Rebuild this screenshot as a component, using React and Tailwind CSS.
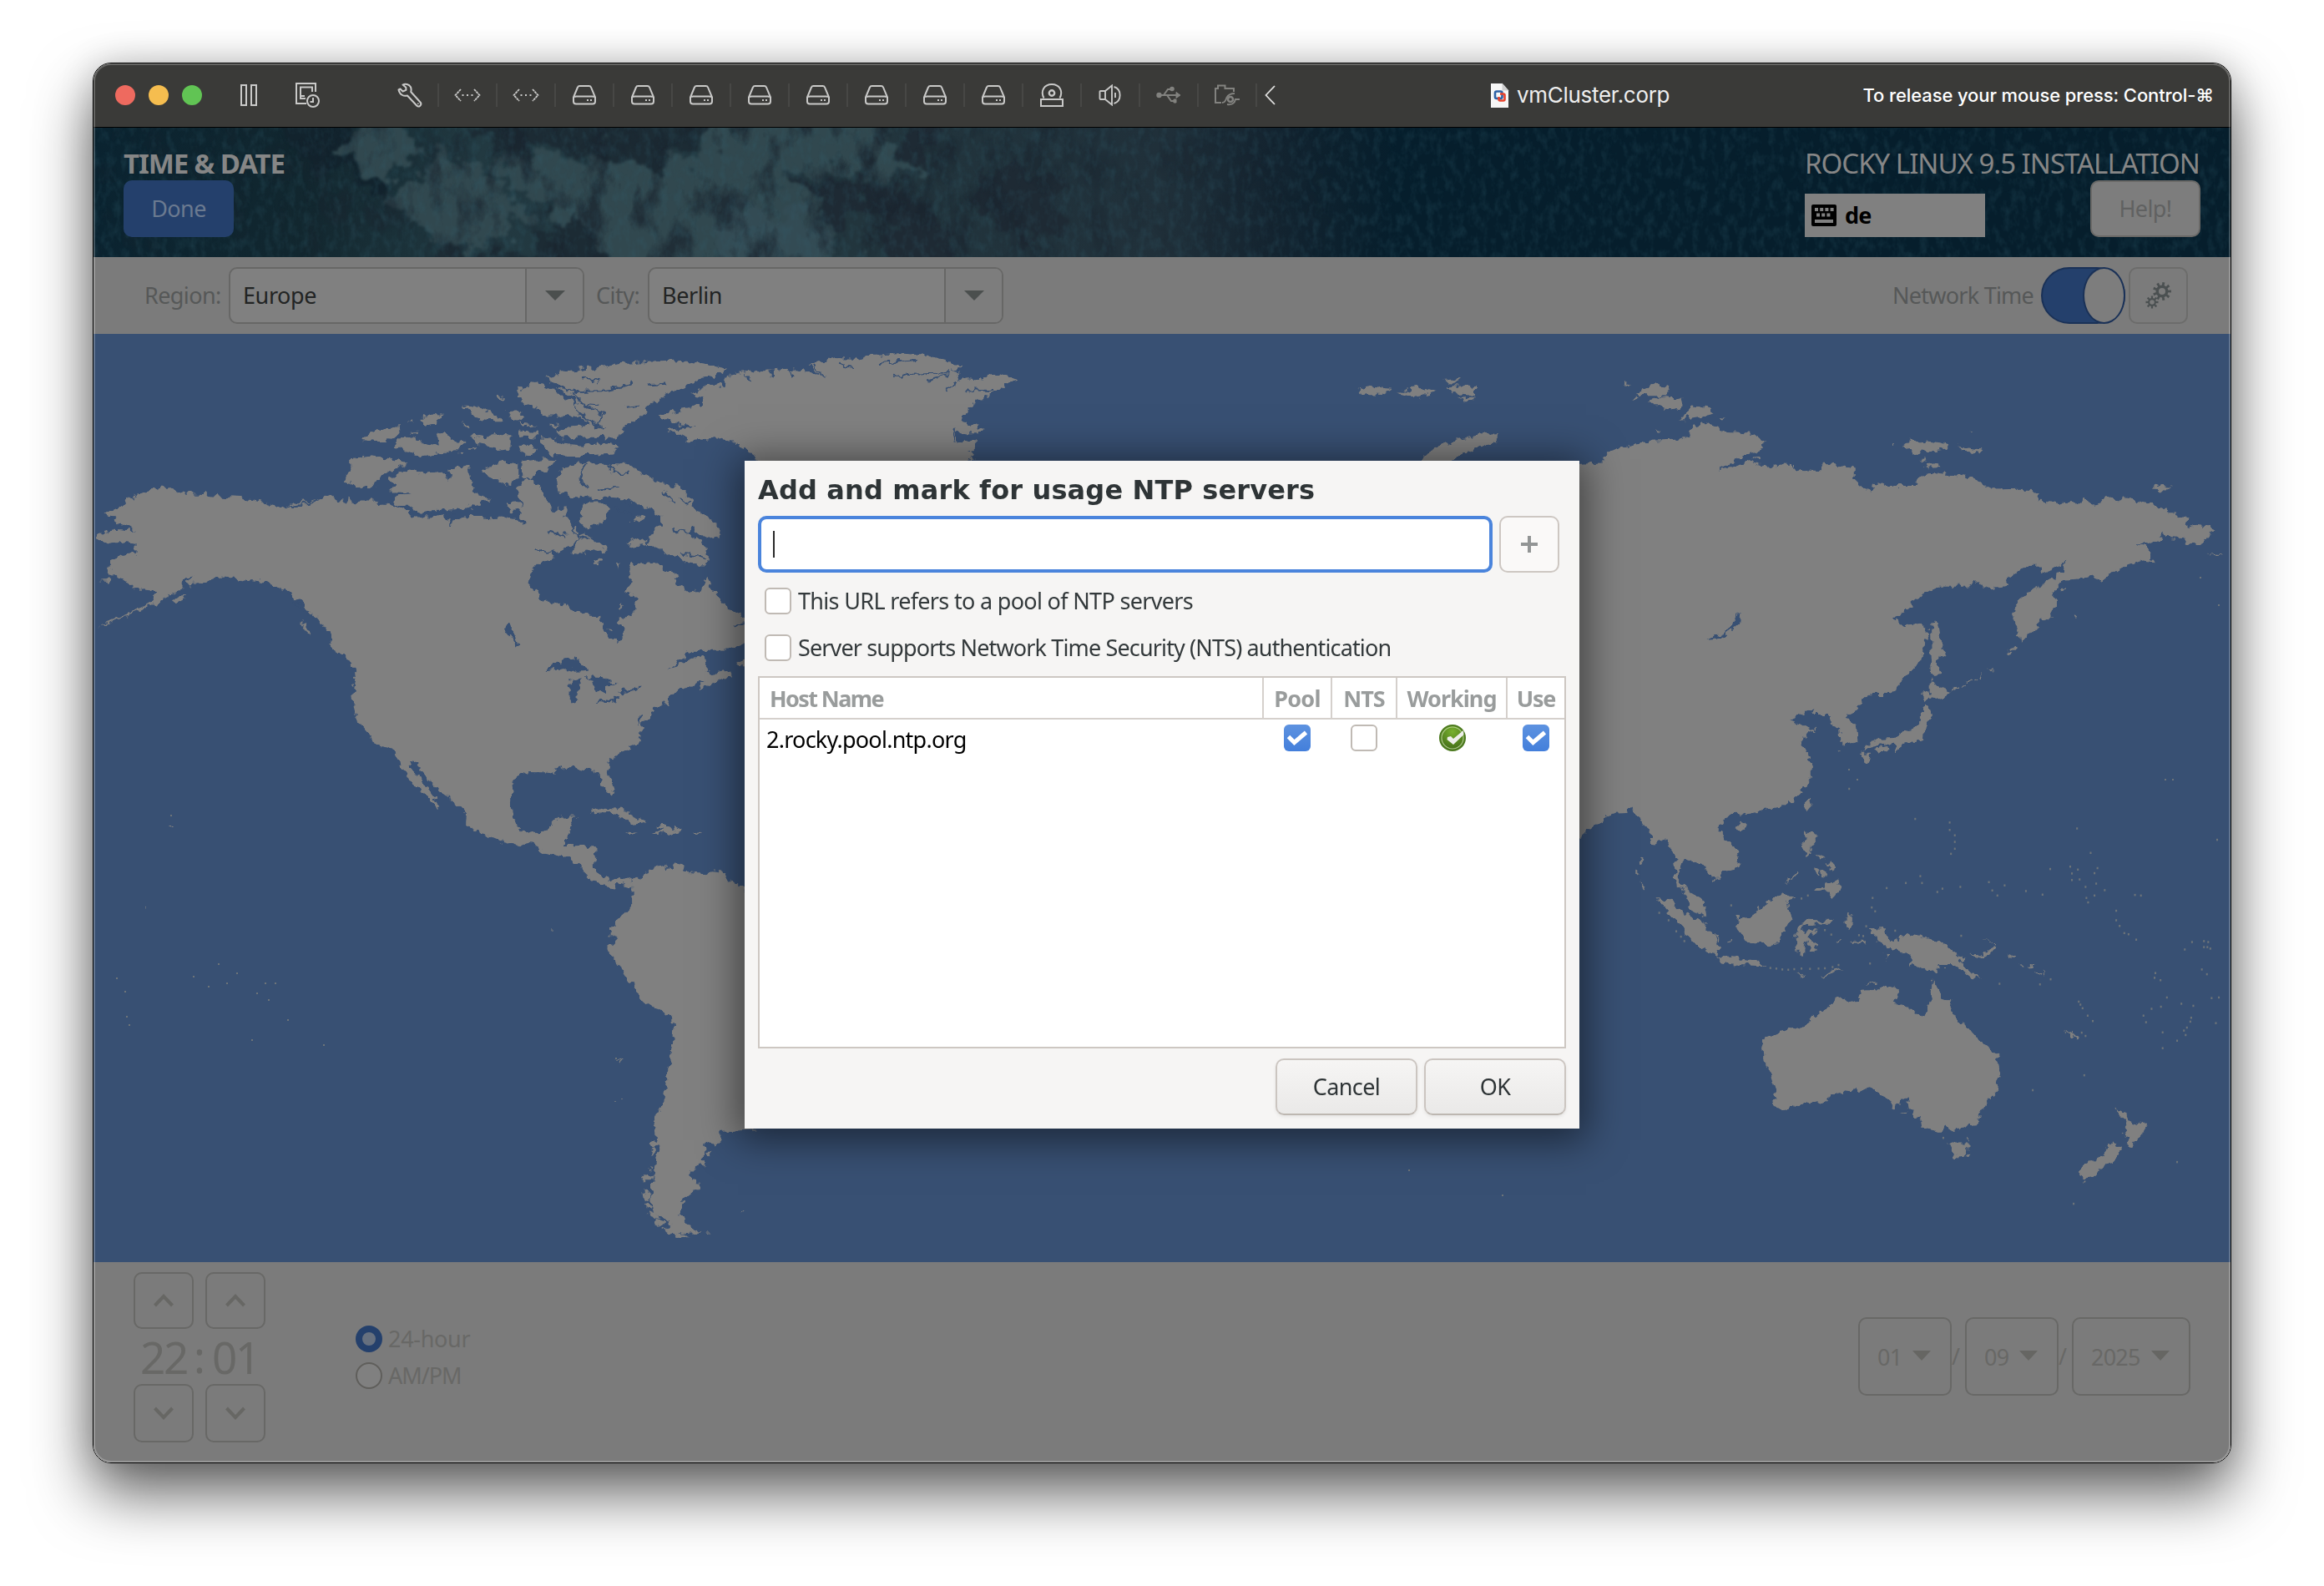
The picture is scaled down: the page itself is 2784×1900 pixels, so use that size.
import React from "react";

const GUEST = "font-['Noto_Sans',sans-serif]";

/* ---------- toolbar icons ---------- */

const Disk = () => (
  <svg width="30" height="26" viewBox="0 0 30 26" fill="none" stroke="#c9c9c8" strokeWidth="2">
    <path d="M7 3.500Q7.600 2 9.500 2H20.500Q22.400 2 23 3.500L28 15.500V20.500Q28 23.500 25 23.500H5Q2 23.500 2 20.500V15.500Z" />
    <path d="M3 15.500Q3.500 14.500 5 14.500H25Q26.500 14.500 27 15.500" />
    <path d="M18 19H20M22 19H24" />
  </svg>
);
const Net = () => (
  <svg width="32" height="18" viewBox="0 0 32 18" fill="none" stroke="#c9c9c8" strokeWidth="1.800">
    <path d="M8 2L1.500 9L8 16M24 2L30.500 9L24 16" strokeDasharray="3 .6" />
    <path d="M9.500 9H11.500M15 9H17M20.500 9H22.500" strokeWidth="2" />
  </svg>
);
const Wrench = () => (
  <svg width="30" height="30" viewBox="0 0 30 30" fill="none" stroke="#c9c9c8" strokeWidth="2" strokeLinejoin="round">
    <path d="M6.500 2.500C9.500 .8 14 1.800 15.800 5C16.800 7 16.800 9 16.200 11L27.500 23.500C30 26.500 25.800 30.200 23.200 27.500L12 15.500C7.500 16.800 2.800 14.500 1.500 8.500L3.500 7.500L6.500 10.500L10.500 8.800L10.300 5.800Z" />
    <path d="M24.800 24.500V26" strokeWidth="1.500" />
  </svg>
);
const Snapshot = () => (
  <svg width="30" height="32" viewBox="0 0 30 32" fill="none" stroke="#c9c9c8" strokeWidth="2">
    <path d="M13 26H1V2H24V12" />
    <path d="M11 17H6V6.500H20V12M6 17V20H12" />
    <circle cx="21" cy="23" r="7" />
    <path d="M21 19V24H17.500" />
  </svg>
);
const Cd = () => (
  <svg width="30" height="30" viewBox="0 0 30 30" fill="none" stroke="#c9c9c8" strokeWidth="2">
    <path d="M5.500 18.500C1 10 6 2 15 2S29 10 24.500 18.500" />
    <circle cx="15" cy="12.500" r="3.200" strokeWidth="2.400" />
    <path d="M2 20H28V28H2Z" />
  </svg>
);
const Sound = () => (
  <svg width="28" height="26" viewBox="0 0 28 26" fill="none" stroke="#c9c9c8" strokeWidth="1.900">
    <path d="M8 8H2.500Q1.500 8 1.500 9V17Q1.500 18 2.500 18H8ZM8 8L16 1.500V24.500L8 18" />
    <path d="M18.500 3C28 6 28 20 18.500 23" />
    <path d="M20 10V16" />
  </svg>
);
const Usb = () => (
  <svg width="30" height="22" viewBox="0 0 30 22" fill="none" stroke="#82827f" strokeWidth="2">
    <circle cx="3.500" cy="11" r="2.200" fill="#82827f" />
    <path d="M3 11H26M9 11L14 4H17M13 11L18 18H21" />
    <circle cx="19" cy="3.500" r="1.800" fill="#82827f" />
    <path d="M21 16H24V20H21Z" fill="#82827f" strokeWidth="1" />
    <path d="M24 7.500L29 11L24 14.500Z" fill="#82827f" strokeWidth="1" />
  </svg>
);
const Folder = () => (
  <svg width="32" height="28" viewBox="0 0 32 28" fill="none" stroke="#82827f" strokeWidth="2">
    <path d="M9 23H2V6H5V2.500H13.500V6H24V10" />
    <path d="M10 23C14 23 14 20 15.500 17C17 14 20 12 25 12" />
    <circle cx="20" cy="19" r="3" strokeWidth="2.500" />
    <path d="M16 25C21 26 25 24 26 19H31" />
  </svg>
);

const DocIcon = () => (
  <svg width="23" height="31" viewBox="0 0 23 31">
    <path d="M.5 .5H14.500L22.500 9.500V30.500H.5Z" fill="#f6f6f6" stroke="#222" strokeWidth=".8" />
    <path d="M14.500 .5V9.500H22.500Z" fill="#cfcfcf" />
    <rect x="6" y="10.500" width="8.500" height="8.500" rx="2" fill="none" stroke="#2e62a6" strokeWidth="2.600" />
    <path d="M12 13.500H16Q17.500 13.500 17.500 15V20Q17.500 21.500 16 21.500H12Q10.500 21.500 10.500 20V17" fill="none" stroke="#e8432d" strokeWidth="2.600" />
  </svg>
);

function TitleBar() {
  const cells = [Net, Net, Disk, Disk, Disk, Disk, Disk, Disk, Disk, Disk, Cd, Sound, Usb, Folder];
  return (
    <div className="flex h-[77px] shrink-0 items-center border-b border-black bg-[#3a3a38] pl-[26px] pr-5 font-['Inter',sans-serif]">
      <div className="flex gap-4">
        <span className="size-6 rounded-full bg-[#ee6a5f]" />
        <span className="size-6 rounded-full bg-[#f5bd4f]" />
        <span className="size-6 rounded-full bg-[#61c454]" />
      </div>
      <svg className="ml-[46px]" width="20" height="26" viewBox="0 0 20 26" fill="none" stroke="#c9c9c8" strokeWidth="2">
        <path d="M1 1H7V25H1ZM13 1H19V25H13Z" />
      </svg>
      <span className="ml-[46px] w-[30px]"><Snapshot /></span>
      <span className="ml-[92px] w-[30px]"><Wrench /></span>
      <div className="ml-[18px] flex">
        {cells.map((Icon, i) => (
          <span key={i} className="flex h-[28px] w-[70px] items-center justify-center border-l-2 border-[#474745]">
            <Icon />
          </span>
        ))}
        <span className="flex h-[28px] items-center border-l-2 border-[#474745] pl-[9px]">
          <svg width="13" height="24" viewBox="0 0 13 24" fill="none" stroke="#dededd" strokeWidth="1.800"><path d="M12 1L1.500 12L12 23" /></svg>
        </span>
      </div>
      <div className="ml-[257px] flex items-center gap-[9px]">
        <DocIcon />
        <span className="whitespace-nowrap text-[26px] leading-8 tracking-[-0.3px] text-[#eeeeee]">vmCluster.corp</span>
      </div>
      <span className="ml-auto whitespace-nowrap text-[22px] font-medium leading-8 tracking-[-0.1px] text-white">To release your mouse press: Control-⌘</span>
    </div>
  );
}

/* ---------- installer header ---------- */

const Texture = () => (
  <svg className="absolute inset-0" width="2560" height="155" viewBox="112 153 2560 155" preserveAspectRatio="none">
    <defs>
      <linearGradient id="sea" x1="0" x2="1" y1="0" y2="0">
        <stop offset="0" stopColor="#0a2330" />
        <stop offset=".1" stopColor="#12272f" />
        <stop offset=".18" stopColor="#223941" />
        <stop offset=".36" stopColor="#22353d" />
        <stop offset=".5" stopColor="#20303a" />
        <stop offset=".55" stopColor="#142430" />
        <stop offset=".61" stopColor="#061e2c" />
        <stop offset="1" stopColor="#061e2c" />
      </linearGradient>
      <linearGradient id="fadeStops" x1="0" x2="1" y1="0" y2="0">
        <stop offset="0" stopColor="#fff" stopOpacity=".35" />
        <stop offset=".1" stopColor="#fff" stopOpacity=".5" />
        <stop offset=".2" stopColor="#fff" />
        <stop offset=".38" stopColor="#fff" />
        <stop offset=".52" stopColor="#fff" stopOpacity=".35" />
        <stop offset=".59" stopColor="#fff" stopOpacity="0" />
      </linearGradient>
      <mask id="fade"><rect x="112" y="153" width="2560" height="155" fill="url(#fadeStops)" /></mask>
      <filter id="rough" x="-5%" y="-20%" width="110%" height="140%" colorInterpolationFilters="sRGB">
        <feTurbulence type="fractalNoise" baseFrequency=".035" numOctaves="5" seed="4" result="n" />
        <feDisplacementMap in="SourceGraphic" in2="n" scale="70" xChannelSelector="R" yChannelSelector="G" />
        <feGaussianBlur stdDeviation="1.600" />
      </filter>
      <filter id="darkVeins" x="0" y="0" width="100%" height="100%" colorInterpolationFilters="sRGB">
        <feTurbulence type="fractalNoise" baseFrequency=".03 .018" numOctaves="5" seed="8" />
        <feColorMatrix values="0 0 0 0 .1  0 0 0 0 .14  0 0 0 0 .18  4 0 0 0 -1.950" />
      </filter>
      <filter id="grain" x="0" y="0" width="100%" height="100%" colorInterpolationFilters="sRGB">
        <feTurbulence type="fractalNoise" baseFrequency=".11 .07" numOctaves="3" seed="3" />
        <feColorMatrix values="0 0 0 0 .2  0 0 0 0 .38  0 0 0 0 .44  1.800 0 0 0 -.75" />
      </filter>
    </defs>
    <rect x="112" y="153" width="2560" height="155" fill="url(#sea)" />
    <g filter="url(#rough)">
      <g transform="translate(100 60) scale(.4847 .3333)">
        <g fill="#31484f">
          <path d="M660 230H770L830 330L800 420L740 470L690 420L665 370L630 350Z" />
          <path d="M860 400L940 390L1010 440L1060 520L1110 620L1000 680L900 720L780 560L760 500L830 470Z" />
          <path d="M1000 380L1200 380L1400 400L1568 410L1620 800H1290L1230 640L1130 560L1030 440Z" />
        </g>
        <g fill="#1c2b34">
          <path d="M960 230H1568V330L1420 410L1300 380L1150 350L1000 350Z" />
          <path d="M1140 600L1230 600L1280 700L1270 820H850L900 720L1050 730L1150 690Z" />
          <path fill="#12232d" d="M480 230H640L640 350L700 430L760 500L740 540L660 450L540 420Z" />
        </g>
      </g>
      <g transform="translate(860 60) scale(.4847 .3333)">
        <path fill="#31484f" d="M-60 400L0 230H370L420 330L500 430L380 460L250 440L160 480L240 520L280 680L360 820H-60Z" />
        <path fill="#334b54" d="M10 560L230 600L290 740L0 800Z" />
        <g fill="#1e2a34">
          <path d="M170 470L400 480L500 520L560 620L570 820H400L430 600L350 560L270 660L250 530Z" />
          <path d="M640 430L860 430L860 640L740 700L640 560Z" />
          <path d="M460 230H560L500 420L440 330Z" />
        </g>
      </g>
    </g>
    <rect x="112" y="153" width="2560" height="155" filter="url(#darkVeins)" mask="url(#fade)" opacity=".7" />
    <rect x="112" y="153" width="2560" height="155" filter="url(#grain)" opacity=".3" />
  </svg>
);

function Header() {
  return (
    <div className="relative h-[155px] shrink-0 overflow-hidden">
      <Texture />
      <div className="relative flex justify-between px-9 pt-[21px]">
        <div>
          <div className="h-[42px] whitespace-nowrap text-[33px] font-bold leading-[43px] tracking-[-1.1px] text-[#868686]">TIME &amp; DATE</div>
          <button className="flex h-[68px] w-[132px] items-center justify-center rounded-[10px] bg-[#24406c] text-[27px] tracking-[-0.6px] text-[#6b7a90]">Done</button>
        </div>
        <div className="w-[474px]">
          <div className="h-[42px] whitespace-nowrap text-[33px] leading-[43px] tracking-[-1px] text-[#868686]">ROCKY LINUX 9.5 INSTALLATION</div>
          <div className="flex items-end justify-between">
            <div className="flex h-[52px] w-[216px] items-center gap-[10px] bg-[#808080] pl-2 text-[27px] font-bold tracking-[-0.8px] text-black">
              <svg width="30" height="26" viewBox="0 0 30 26">
                <rect width="30" height="26" rx="2" />
                <path d="M4 6H27" stroke="#808080" strokeWidth="4" strokeDasharray="4 2.200" />
                <path d="M6 12.500H24" stroke="#808080" strokeWidth="4" strokeDasharray="4 2.200" />
                <path d="M4 20H26" stroke="#808080" strokeWidth="4" />
              </svg>
              de
            </div>
            <button className="flex h-[68px] w-[132px] items-center justify-center rounded-[10px] border-2 border-[#6a6967] bg-[#7d7d7d] text-[27px] tracking-[-0.6px] text-[#606161]">Help!</button>
          </div>
        </div>
      </div>
    </div>
  );
}

/* ---------- region row ---------- */

const Combo = ({ value }) => (
  <div className="flex h-[68px] w-[426px] overflow-hidden rounded-[10px] border-2 border-[#676766] bg-[#808080]">
    <span className="flex w-[353px] items-center pl-[15px] pt-px text-[27px] tracking-[-0.4px] text-[#222424]">{value}</span>
    <span className="flex flex-1 items-center justify-center border-l-2 border-[#676766] bg-[#7d7d7d]">
      <svg width="24" height="12" viewBox="0 0 24 12" fill="#4b4f4e"><path d="M0 0H24L12 12Z" /></svg>
    </span>
  </div>
);

function gearPath(cx, cy, r, depth, teeth) {
  let d = "";
  for (let i = 0; i < teeth; i++) {
    const a = (i / teeth) * Math.PI * 2;
    const s = Math.PI / teeth;
    const p = (ang, rad) => `${(cx + Math.cos(ang) * rad).toFixed(2)} ${(cy + Math.sin(ang) * rad).toFixed(2)}`;
    d += `${i ? "L" : "M"}${p(a - s * 0.4, r + depth)}L${p(a + s * 0.4, r + depth)}L${p(a + s * 0.5, r)}L${p(a + s * 1.5, r)}`;
  }
  return d + "Z";
}

function RegionBar() {
  return (
    <div className="flex h-[92px] shrink-0 items-center bg-[#7b7b7b] pl-[61px] text-[27px] text-[#565858]">
      <span className="w-[101px] whitespace-nowrap tracking-[-0.6px]">Region:</span>
      <Combo value="Europe" />
      <span className="ml-[14px] w-[62px] whitespace-nowrap tracking-[-0.5px]">City:</span>
      <Combo value="Berlin" />
      <span className="ml-auto w-[178px] whitespace-nowrap tracking-[-0.75px]">Network Time</span>
      <span className="flex h-[68px] w-[101px] justify-end rounded-[34px] border-2 border-[#1a3157] bg-[#24406c]">
        <span className="-my-0.5 -mr-0.5 h-[68px] w-[51px] rounded-[50%] border-2 border-[#1a3157] bg-[#7d7d7d]" />
      </span>
      <span className="ml-[4px] mr-[51px] flex h-[68px] w-[71px] items-center justify-center rounded-[10px] border-2 border-[#6c6c6b] bg-[#7b7b7b]">
        <svg width="32" height="34" viewBox="0 0 32 34" fill="none">
          <path d={gearPath(20, 12, 7.5, 3.5, 9)} fill="#4b5051" />
          <circle cx="20" cy="12" r="4" fill="#7b7b7b" />
          <path d={gearPath(8, 25, 5, 2.6, 8)} fill="#4b5051" />
          <circle cx="8" cy="25" r="2.800" fill="#7b7b7b" />
        </svg>
      </span>
    </div>
  );
}

/* ---------- world map ---------- */

const northAmerica = [
  "165,425 180,425 200,434 235,440 270,442 300,447 345,450 385,460 410,464 450,479 480,465 520,457 545,450 562,442 580,458 600,466 607,452 615,466 630,458 660,458 690,470 720,475 745,483 742,495 760,503 800,503 825,498 835,508 847,530 848,510 870,503 890,498 930,507 970,505 1000,512 1010,524 1018,510 1005,495 1010,465 1003,450 1000,430 1008,405 1030,400 1055,420 1062,445 1072,465 1085,490 1100,475 1115,485 1110,505 1120,510 1130,530 1145,540 1138,560 1120,585 1100,590 1080,600 1085,612 1055,620 1040,640 1028,665 1025,695 1045,700 1058,730 1085,730 1130,750 1160,765 1198,767 1200,800 1215,822 1235,838 1248,825 1246,805 1238,775 1262,768 1275,750 1278,725 1270,710 1250,702 1262,685 1265,665 1258,640 1262,625 1290,628 1320,625 1340,645 1370,655 1376,685 1400,705 1430,700 1443,665 1455,690 1475,715 1490,745 1530,770 1600,800 1560,830 1533,840 1500,857 1420,858 1395,870 1355,915 1375,900 1410,882 1440,878 1443,900 1440,915 1460,925 1500,915 1505,932 1470,945 1430,968 1425,955 1440,940 1400,955 1375,965 1358,985 1360,998 1340,1005 1315,1018 1312,1040 1290,1060 1287,1085 1285,1105 1250,1130 1215,1155 1210,1180 1220,1205 1228,1235 1220,1250 1205,1235 1193,1210 1190,1190 1175,1182 1155,1180 1120,1173 1085,1180 1090,1192 1060,1188 1025,1187 1000,1198 987,1220 990,1245 983,1265 985,1300 1005,1340 1030,1350 1070,1343 1085,1320 1100,1305 1135,1305 1125,1325 1120,1355 1108,1382 1150,1383 1185,1390 1183,1410 1178,1445 1200,1470 1220,1482 1240,1470 1270,1480 1290,1500 1240,1485 1225,1500 1200,1492 1165,1465 1125,1420 1070,1405 1040,1382 1020,1378 1000,1385 950,1368 910,1350 878,1328 880,1300 860,1275 820,1240 800,1215 770,1180 760,1160 745,1155 750,1175 780,1220 800,1250 818,1278 810,1283 785,1260 775,1240 745,1210 735,1185 708,1130 665,1110 650,1085 620,1045 612,985 620,940 615,900 605,885 565,855 560,820 530,775 500,740 460,700 435,690 400,675 350,670 320,665 290,665 255,680 225,685 240,655 215,680 205,700 165,725 130,745 80,768 15,800 50,775 110,750 140,730 155,700 120,695 92,698 90,680 60,665 35,640 45,620 70,605 103,600 103,575 70,570 35,577 10,552 50,535 110,540 90,530 60,520 55,505 28,490 65,480 80,455 120,437",
  "610,345 650,338 700,345 740,362 700,378 670,405 665,420 632,427 610,410 593,403 610,370",
  "690,400 740,375 780,385 825,380 838,410 842,375 885,362 885,380 890,405 900,440 935,455 910,470 880,478 830,485 770,488 740,470 710,470 715,450 750,440 700,435 715,415",
  "635,295 665,270 700,260 730,258 715,280 695,300 670,300",
  "710,320 720,290 745,288 780,305 815,310 812,285 830,275 840,298 875,300 865,325 820,330 770,340 740,325",
  "770,240 790,225 822,228 810,250 780,260",
  "875,205 910,208 950,225 962,245 935,245 900,235",
  "950,178 968,182 965,188 952,186",
  "742,242 758,242 755,250", "870,250 888,262 884,266", "750,275 765,273 762,280", "884,320 898,316 898,324", "1075,255 1095,255 1090,265", "1000,250 1045,254 1010,258",
  "890,285 930,290 945,278 985,290 985,320 950,325 925,310 900,305",
  "975,220 1000,218 1018,235 1010,245 985,240",
  "1000,315 1020,308 1042,320 1040,333 1010,330",
  "998,272 1045,275 1045,290 1005,288",
  "915,380 940,360 975,352 1000,365 1000,400 975,420 960,405 930,395",
  "970,465 1000,462 1010,480 990,488",
  "1010,355 1060,348 1085,350 1070,375 1045,385 1030,400 1012,390",
  "1003,185 1005,160 1045,138 1060,150 1095,170 1130,195 1135,220 1110,232 1065,232 1040,210 1020,205",
  "1065,130 1110,115 1160,103 1200,100 1240,90 1300,85 1360,82 1420,90 1490,105 1470,120 1430,130 1390,155 1340,180 1305,205 1300,220 1275,245 1240,262 1250,275 1230,290 1150,288 1105,290 1090,270 1120,262 1170,255 1150,240 1120,225 1140,200 1130,180 1100,160 1080,145",
  "1055,290 1090,290 1100,305 1150,310 1215,303 1238,318 1225,335 1180,338 1120,338 1080,335 1060,315",
  "1092,400 1105,370 1145,357 1200,358 1260,360 1285,380 1330,410 1380,425 1410,455 1415,480 1450,505 1478,530 1475,555 1460,565 1430,550 1410,530 1400,545 1440,580 1447,610 1440,632 1400,625 1350,600 1310,570 1310,550 1335,525 1335,500 1300,475 1260,455 1220,450 1180,455 1130,450 1095,430",
  "1150,465 1190,462 1215,480 1205,510 1180,530 1160,535 1145,510",
  "1140,560 1150,545 1175,560 1215,595 1190,598 1165,590 1155,605 1130,600",
  "1255,570 1285,560 1310,575 1275,582", "1268,510 1280,495 1298,505 1290,518", "1180,620 1195,612 1200,622 1185,628", "1227,628 1240,628 1235,640",
  "1515,890 1533,880 1545,905 1520,902",
  "1168,1298 1200,1283 1235,1285 1270,1305 1308,1322 1270,1328 1250,1312 1215,1294",
  "1325,1330 1350,1328 1390,1345 1350,1355 1310,1350 1340,1345",
  "1255,1347 1282,1351 1262,1356", "1408,1347 1430,1349 1412,1355",
  "188,727 205,712 225,710 220,722 200,735", "15,672 40,668 38,676",
  "556,848 575,848 600,860 630,885 640,908 605,885", "490,785 500,787 517,822 500,805",
  "1210,805 1220,808 1214,812", "1232,745 1245,740 1240,752",
  "182,1327 190,1330 187,1337", "129,1543 134,1545 131,1548",
];
const northLakes = [
  "963,795 978,785 990,815 1002,845 998,853 985,825 970,815",
  "1062,915 1090,890 1125,880 1150,890 1165,915 1140,918 1115,910 1090,912",
  "1125,940 1150,935 1140,970 1140,995 1128,1000 1120,980",
  "1160,930 1200,932 1230,950 1205,955 1208,975 1185,965 1180,945",
  "1183,1000 1240,985 1235,995 1200,1003", "1235,970 1285,960 1280,970 1245,975",
];
const northInlets = [
  "1085,148 1140,168 1200,166 1240,155 1270,140", "1130,170 1150,200 1190,205", "1160,205 1200,225 1185,260", "1250,210 1290,205", "1300,150 1345,145",
  "1135,215 1160,240 1200,262", "1150,130 1190,140", "1160,360 1145,385 1150,410 1165,425", "1215,360 1225,385 1260,385", "1190,430 1240,425",
  "1245,455 1262,475", "1340,430 1370,470", "1365,535 1400,545", "1380,600 1440,612", "1380,450 1405,470", "1230,480 1270,500", "745,440 710,438",
  "1070,545 1120,555", "1040,590 1080,600", "455,480 530,458", "450,700 520,775", "465,715 490,740", "745,488 850,497", "1145,500 1130,545 1165,560", "1505,797 1535,785", "1280,1060 1290,1035",
];
const greenland =
  "450,165 490,155 540,150 590,145 640,140 690,150 750,165 705,130 740,115 790,102 860,105 900,90 980,85 1070,92 1110,105 1185,130 1150,148 1175,155 1165,180 1200,175 1240,180 1255,165 1300,160 1358,178 1310,205 1270,235 1220,255 1215,275 1190,300 1180,330 1245,350 1240,370 1165,370 1170,400 1225,400 1225,430 1200,440 1225,460 1170,480 540,480 530,450 500,425 460,400 410,388 330,400 300,380 260,360 350,350 240,325 235,305 300,285 370,270 378,245 330,235 370,210 410,195 440,205";
const greenlandInlets = ["975,168 1020,158 1145,154", "1075,182 1140,160", "1132,215 1170,185", "720,130 755,165", "800,125 840,135", "925,120 1040,108", "590,145 590,178", "640,145 655,172", "1195,220 1280,222", "1162,350 1162,395", "500,160 525,185"];
const southAmerica = [
  "324,298 355,285 365,262 400,255 440,237 440,255 465,250 480,235 510,250 515,262 585,270 600,258 660,262 665,290 700,305 726,325 760,340 760,1130 710,1132 640,1137 640,1165 620,1180 580,1172 580,1200 578,1245 540,1262 528,1280 540,1300 567,1305 560,1325 520,1355 495,1380 495,1400 510,1435 540,1465 575,1475 520,1478 440,1470 460,1450 440,1425 400,1410 388,1370 392,1330 400,1290 405,1255 418,1190 392,1185 407,1150 400,1105 435,1045 445,950 460,900 468,840 472,790 468,755 420,725 370,708 343,685 340,660 310,625 270,570 240,545 235,520 268,490 248,485 248,460 265,432 300,402 322,380 320,330",
  "390,1190 403,1190 397,1222 387,1222", "355,1297 380,1275 400,1285 392,1297", "358,1325 375,1330 372,1350 360,1348", "370,1340 385,1345 385,1368 365,1362",
  "365,1372 390,1385 385,1398 370,1390", "378,1400 410,1412 425,1430 395,1425", "400,1430 440,1440 435,1455 405,1448", "430,1462 500,1478 530,1490 490,1490 460,1478",
  "585,1205 610,1202 605,1214 590,1212", "585,1474 605,1474 595,1478", "690,1400 697,1404", "718,1404 728,1401 724,1407", "260,892 282,900 275,903", "378,1255 395,1258 385,1266",
  "252,1030 258,1030 255,1035", "288,1030 294,1030 291,1035", "30,452 36,452 33,458",
];
const asia = [
  "0,438 85,432 78,410 90,395 130,378 185,358 245,355 285,342 280,320 320,298 347,310 365,330 430,335 458,360 455,385 400,415 345,460 400,440 420,430 455,445 500,438 525,440 530,455 590,460 595,435 615,440 650,445 668,455 668,490 690,520 705,528 718,497 740,510 815,510 820,485 845,467 905,475 950,485 965,500 995,522 1060,520 1095,525 1103,540 1103,562 1150,565 1205,567 1215,555 1235,582 1252,575 1250,552 1320,557 1370,572 1415,600 1450,625 1452,655 1465,640 1500,645 1520,663 1490,685 1480,712 1450,700 1435,683 1400,680 1393,662 1385,690 1365,705 1330,700 1358,720 1372,765 1345,760 1290,788 1250,825 1230,812 1195,825 1155,828 1135,865 1145,905 1130,930 1130,955 1105,965 1085,1000 1057,1040 1052,990 1043,940 1050,900 1070,875 1100,850 1135,820 1160,790 1165,760 1110,810 1105,780 1065,782 1025,830 1030,845 985,853 955,835 930,845 865,845 830,875 790,925 760,950 790,978 830,970 843,1010 830,1050 828,1095 790,1155 750,1210 710,1210 685,1235 680,1258 650,1280 675,1325 677,1365 640,1378 637,1320 615,1305 615,1280 570,1280 575,1255 545,1275 515,1297 535,1310 580,1328 540,1365 555,1400 570,1440 570,1480 545,1540 520,1568 0,1600",
  "165,190 205,163 235,185 225,208 180,208 155,200", "180,225 215,210 265,215 262,255 210,245", "262,288 285,242 320,245 342,268", "125,163 148,165 146,173 128,172", "145,213 160,212 158,220",
  "782,375 805,352 830,365 850,358 893,370 885,388 840,395 810,402", "910,378 970,388 962,400 920,392", "835,435 860,432 872,448 845,450", "824,420 836,418 834,428", "942,330 952,332 946,336", "760,370 767,370 764,380",
  "1362,522 1385,505 1413,515 1400,525", "1495,733 1535,742 1520,745", "350,280 370,282 360,287", "425,415 450,410 448,420", "204,320 216,320 210,327",
  "858,962 864,965 870,1020 888,1085 868,1080 862,1110 874,1140 853,1146 850,1080 849,1000",
  "848,1160 870,1185 897,1200 865,1228 850,1215 830,1232 825,1212 848,1205",
  "832,1240 850,1265 850,1290 835,1310 830,1362 790,1370 765,1395 760,1372 710,1385 690,1400 700,1380 725,1360 765,1358 780,1335 810,1325 825,1300 825,1260",
  "682,1405 710,1405 700,1440 690,1435", "718,1395 745,1383 748,1396 722,1408", "1150,855 1166,852 1155,862", "1185,942 1192,948 1188,955", "632,1398 641,1398 636,1404",
];
const southEast = [
  "0,-100 560,-20 550,0 520,50 495,78 455,85 405,100 388,97 365,110 348,145 365,180 390,210 398,250 390,285 360,295 340,325 330,295 305,265 270,245 262,280 255,310 270,345 310,380 318,410 322,447 290,420 275,385 265,345 240,315 250,290 247,250 235,200 227,178 205,200 190,198 190,165 175,130 155,105 148,80 135,95 100,97 85,105 80,125 60,135 24,178 0,190",
  "388,145 400,128 418,135 405,160", "548,65 562,42 571,42 565,75 555,93",
  "555,158 577,160 578,190 565,210 568,240 558,235 545,205 553,190", "575,345 600,340 630,315 635,350 620,375 605,365 602,350 575,358",
  "575,232 600,240 605,248 585,244", "575,275 590,285 585,305 575,290", "590,290 605,285 600,310 592,308", "605,260 622,275 618,295 608,280", "506,328 540,286 540,298 512,330",
  "393,445 420,447 450,415 500,358 530,382 510,390 520,450 500,500 490,535 470,540 410,522 395,485",
  "203,378 235,385 270,430 310,460 345,510 350,550 345,570 325,565 290,525 260,470 225,415",
  "345,575 380,580 420,590 440,590 465,610 400,605 355,598", "590,655 605,630 640,617 605,645", "530,630 555,640 550,645",
  "540,475 560,456 600,458 617,445 608,467 550,471 548,490 592,484 562,507 588,562 568,556 556,522 550,568 537,566 530,520",
  "650,440 662,430 660,460 665,472 655,490 650,470", "658,523 685,523 695,533 665,530", "630,527 643,527 640,535",
  "700,485 735,482 745,510 760,530 795,500 850,520 890,540 915,575 930,580 915,595 935,620 970,652 940,645 905,605 870,605 865,625 840,628 810,605 795,610 805,590 790,565 750,545 725,530 720,505",
  "940,568 970,570 990,550 1003,545 990,568 965,579", "965,517 1000,535 1005,548 990,532",
  "1028,566 1045,582 1038,585", "1055,595 1068,612 1062,612", "1075,605 1095,612 1085,615", "1095,627 1110,637 1100,637", "1110,625 1118,642 1113,642",
  "1158,818 1199,852 1194,858", "742,568 750,570 744,588",
  "855,657 870,690 875,715 893,722 910,795 945,825 960,855 975,870 1007,910 1005,930 1012,970 1003,1030 985,1055 965,1105 960,1140 935,1143 910,1163 890,1145 873,1162 830,1148 820,1110 800,1090 795,1045 762,1085 745,1045 705,1020 660,1028 620,1040 595,1065 540,1070 510,1090 480,1078 475,1065 485,1055 485,1030 470,965 458,930 455,880 462,850 495,828 555,808 580,775 580,760 595,768 620,722 645,710 660,730 680,728 690,688 725,685 735,672 775,685 760,728 800,755 825,775 835,772 845,740 847,695",
  "890,1203 938,1203 937,1240 915,1257 905,1248", "776,1104 795,1101 790,1108", "688,665 720,665 715,673",
  "1280,1078 1305,1105 1310,1125 1330,1140 1358,1138 1345,1170 1320,1215 1308,1210 1315,1185 1297,1170 1308,1150 1300,1120",
  "1275,1200 1298,1215 1280,1262 1255,1270 1240,1315 1215,1320 1195,1308 1215,1275 1245,1250", "1207,1326 1215,1326 1211,1333",
  "163,250 172,248 168,272", "157,288 167,290 162,298", "163,318 182,345 180,358", "342,500 355,508 352,522", "372,517 382,518 376,525", "934,1185 940,1185 938,1198",
];
const southEastDots = [
  [211, 430], [233, 455], [251, 492], [262, 510], [270, 525], [380, 405], [472, 615], [486, 617], [500, 620], [514, 621], [528, 619], [545, 617], [565, 618], [585, 617], [600, 616], [618, 612], [632, 605], [615, 503], [600, 488], [560, 372], [545, 382],
  [712, 380], [710, 412], [718, 425], [745, 347], [790, 330], [824, 307], [828, 330], [864, 360], [876, 349], [918, 343], [985, 327], [993, 355], [1005, 372], [1022, 338], [1072, 357], [1111, 369], [1129, 283], [893, 127], [893, 152], [905, 170], [905, 192], [905, 215], [896, 232], [812, 115], [657, 14],
  [1176, 275], [1180, 298], [1180, 320], [1194, 285], [1198, 318], [1212, 343], [1237, 332], [1240, 280], [1233, 297], [1257, 354], [1233, 372], [1214, 380], [1218, 395], [1328, 370], [1342, 372], [1192, 147], [1224, 229], [1521, 185],
  [1284, 423], [1284, 455], [1292, 474], [1303, 498], [1313, 502], [1331, 520], [1445, 553], [1462, 528], [1490, 525], [1500, 528], [1498, 545], [1505, 550], [1490, 545], [1485, 620], [1497, 636], [1376, 632], [1388, 656], [1374, 648], [1403, 714], [1437, 735], [1465, 742], [1367, 752], [1389, 745], [1348, 775], [1354, 797], [1393, 831], [1393, 884], [1427, 859], [1447, 840], [1443, 825], [1450, 815], [1458, 795], [1460, 782], [1518, 800], [1525, 714], [1508, 716],
  [1196, 728], [1200, 738], [1205, 750], [1217, 775], [1229, 793], [1212, 843], [1203, 832], [1209, 975], [1088, 1025], [1427, 1266], [1184, 1406], [1130, 653], [1105, 670], [1010, 668], [878, 1185], [706, 600], [690, 508], [765, 490], [920, 507], [697, 475], [680, 505],
];
const pageIslands = [
  "1696,556 1712,540 1745,526 1780,520 1797,519 1790,530 1755,543 1735,556",
  "1626,467 1645,463 1668,466 1656,473 1636,472", "1672,470 1700,464 1722,470 1694,476", "1732,462 1768,463 1768,474 1740,472", "1726,455 1750,453 1742,460", "1748,478 1768,476 1760,482",
];
const pacificDots = [
  [140, 1172], [150, 1188], [152, 1218], [155, 1228], [232, 1170], [262, 1155], [272, 1178], [284, 1166], [318, 1178], [322, 1198], [345, 1222], [302, 1246], [330, 1178], [308, 1190], [388, 1252], [250, 1182], [205, 977], [2594, 934], [2603, 934], [2636, 692], [2658, 725], [738, 1268], [1688, 1402], [1800, 1432], [2215, 922], [2225, 934],
];

const Polys = ({ list }) => list.map((p, i) => <polygon key={i} points={p} />);
const Lines = ({ list }) => list.map((p, i) => <polyline key={i} points={p} />);

function WorldMap() {
  const nw = "translate(110 395) scale(.5102 .4464)";
  const gl = "translate(700 395) scale(.3827 .3333)";
  const land = "#808080";
  const sea = "#385073";
  return (
    <svg className="block shrink-0 bg-[#385073]" width="2560" height="1112" viewBox="112 400 2560 1112">
      <defs>
        <filter id="coast" x="0" y="0" width="100%" height="100%" colorInterpolationFilters="sRGB">
          <feTurbulence type="fractalNoise" baseFrequency=".12" numOctaves="2" seed="11" result="n" />
          <feDisplacementMap in="SourceGraphic" in2="n" scale="12" xChannelSelector="R" yChannelSelector="G" />
        </filter>
      </defs>
      <rect x="112" y="400" width="2560" height="1112" fill={sea} />
      <g filter="url(#coast)" fill={land}>
        <g transform={nw}><Polys list={northAmerica} /></g>
        <g transform={nw} fill={sea}><Polys list={northLakes} /></g>
        <g transform={nw} fill="none" stroke={sea} strokeWidth="5"><Lines list={northInlets} /></g>
        <g transform={gl}><polygon points={greenland} /></g>
        <g transform={gl} fill="none" stroke={sea} strokeWidth="6"><Lines list={greenlandInlets} /></g>
        <g transform="translate(650 950) scale(.3333 .3571)"><Polys list={southAmerica} /></g>
        <g transform="translate(1880 400) scale(.5102 .3571)">
          <Polys list={asia} />
          <polygon fill={sea} points="322,1027 365,1000 385,970 403,932 400,970 380,995 345,1025" />
          <path d="M900 1192L968 1145M988 1130L994 1126M1030 1078L1050 1046" fill="none" stroke={land} strokeWidth="5" strokeDasharray="14 6" />
        </g>
        <g transform="translate(1880 940) scale(.5102 .3571)"><Polys list={southEast} /></g>
        <Polys list={pageIslands} />
      </g>
      <g fill="#6d7479">
        <g transform="translate(1880 940) scale(.5102 .3571)">
          {southEastDots.map(([x, y], i) => <rect key={i} x={x - 2} y={y - 3.5} width="4" height="7" />)}
        </g>
        {pacificDots.map(([x, y], i) => <rect key={i} x={x - 1} y={y - 1} width="2" height="2" />)}
      </g>
    </svg>
  );
}

/* ---------- time and date row ---------- */

const Step = ({ down }) => (
  <button className={(down ? "h-[70px]" : "h-[68px]") + " flex items-center justify-center rounded-[10px] border-2 border-[#686866]"}>
    <svg width="24" height="16" viewBox="0 0 24 16" fill="none" stroke="#676764" strokeWidth="4">
      <path d={down ? "M1.500 2L12 13L22.500 2" : "M1.500 14L12 3L22.500 14"} />
    </svg>
  </button>
);

const DateBox = ({ value, wide }) => (
  <button className={(wide ? "w-[142px]" : "w-[112px]") + " flex h-[94px] items-center justify-between rounded-[10px] border-2 border-[#686866] pl-[21px] pr-[23px]"}>
    <span className="pt-0.5 tracking-[-0.8px]">{value}</span>
    <svg className="mb-0.5" width="22" height="12" viewBox="0 0 22 12" fill="#666663"><path d="M0 0H22L11 12Z" /></svg>
  </button>
);

function BottomBar() {
  return (
    <div className="flex flex-1 items-start bg-[#7b7b7b] pl-12 pt-3 text-[27px] text-[#686866]">
      <div className="grid w-[158px] grid-cols-[72px_14px_72px] grid-rows-[68px_66px_70px]">
        <Step /><span /><Step />
        <span className="text-center text-[53px] leading-[68px] tracking-[-2.2px]">22</span>
        <span className="text-center text-[52px] leading-[66px]">:</span>
        <span className="text-center text-[53px] leading-[68px] tracking-[-2.2px]">01</span>
        <Step down /><span /><Step down />
      </div>
      <div className="ml-[108px] mt-[58px]">
        <div className="flex h-11 items-center gap-[7px]">
          <span className="size-8 rounded-full border-8 border-[#24406c] bg-[#66707f]" />
          <span className="whitespace-nowrap pt-px tracking-[-0.3px]">24-hour</span>
        </div>
        <div className="flex h-11 items-center gap-[7px]">
          <span className="size-8 rounded-full border-2 border-[#5f5e5b] bg-[#808080]" />
          <span className="whitespace-nowrap pt-px tracking-[-1px]">AM/PM</span>
        </div>
      </div>
      <div className="ml-auto mr-12 mt-[54px] flex items-center">
        <DateBox value="01" />
        <span className="w-4">/</span>
        <DateBox value="09" />
        <span className="w-4">/</span>
        <DateBox value="2025" wide />
      </div>
    </div>
  );
}

/* ---------- NTP dialog ---------- */

const Check = ({ on }) =>
  on ? (
    <span className="flex size-8 items-center justify-center rounded-[6px] bg-linear-to-b from-[#5d92e0] to-[#437fdb]">
      <svg width="26" height="20" viewBox="0 0 26 20" fill="none" stroke="#fff" strokeWidth="5"><path d="M2.500 8.500L9.500 15.500L23.500 3.500" /></svg>
    </span>
  ) : (
    <span className="size-8 shrink-0 rounded-[6px] border-2 border-[#c0bab4] bg-white" />
  );

const Working = () => (
  <svg width="32" height="32" viewBox="0 0 32 32">
    <defs>
      <radialGradient id="ok" cx=".5" cy=".25" r=".8"><stop offset="0" stopColor="#78b02f" /><stop offset="1" stopColor="#3c6415" /></radialGradient>
    </defs>
    <circle cx="16" cy="16" r="15" fill="url(#ok)" stroke="#4c7a1f" strokeWidth="2" />
    <circle cx="16" cy="16" r="13" fill="none" stroke="#c4dca4" strokeWidth="1.200" opacity=".8" />
    <path d="M10 15L14 14L17 17L29 7L29.500 12L17 24L9.500 18Z" fill="#eeeeec" />
  </svg>
);

const Option = ({ children, spacing }) => (
  <label className={"flex h-14 items-center gap-2 whitespace-nowrap pl-2 text-[27px] text-[#33393b] " + spacing}>
    <Check />
    {children}
  </label>
);

const DialogButton = ({ children }) => (
  <button className="flex h-[68px] w-[170px] items-center justify-center rounded-[10px] border-2 border-[#cbc5c0] border-b-[#bdb7b1] bg-linear-to-b from-[#f6f5f4] to-[#eae9e8] text-[27px] tracking-[-0.6px] text-[#2e3436] shadow-[0_2px_4px_rgba(0,0,0,0.07)]">
    {children}
  </button>
);

function Dialog() {
  return (
    <div className="absolute left-[780px] top-[476px] flex h-[800px] w-[1000px] flex-col bg-[#f6f5f4] px-4 shadow-[0_6px_44px_8px_rgba(0,0,0,0.5)]">
      <h2 className="h-[66px] whitespace-nowrap pt-1 font-['DejaVu_Sans',sans-serif] text-[32px] font-bold leading-[62px] tracking-[0.14px] text-[#2e3436]">Add and mark for usage NTP servers</h2>
      <div className="flex gap-2">
        <div className="flex h-[68px] w-[880px] items-center rounded-[10px] border-4 border-[#4a84dc] bg-white pl-[14px]">
          <span className="h-8 w-0.5 bg-[#2a2a2a]" />
        </div>
        <button className="flex h-[68px] w-[72px] items-center justify-center rounded-[10px] border-2 border-[#cdc7c2] bg-[#faf9f8]">
          <svg width="20" height="20" viewBox="0 0 20 20" stroke="#929595" strokeWidth="4"><path d="M10 0V20M0 10H20" /></svg>
        </button>
      </div>
      <div className="mt-1.5">
        <Option spacing="tracking-[-0.68px]">This URL refers to a pool of NTP servers</Option>
        <Option spacing="tracking-[-0.86px]">Server supports Network Time Security (NTS) authentication</Option>
      </div>
      <div className="mt-1.5 h-[446px] border-2 border-[#cdc7c2] bg-white">
        <div className="flex h-[50px] border-b-2 border-[#d5d0cc] text-[27px] font-bold leading-[49px] text-[#999c9c]">
          <span className="w-[602px] pl-3 tracking-[-1.6px]">Host Name</span>
          <span className="w-[82px] border-l-2 border-[#d5d0cc] text-center tracking-[-0.8px]">Pool</span>
          <span className="w-[78px] border-l-2 border-[#d5d0cc] text-center tracking-[-1px]">NTS</span>
          <span className="w-[132px] border-l-2 border-[#d5d0cc] text-center tracking-[-1px]">Working</span>
          <span className="flex-1 border-l-2 border-[#d5d0cc] text-center tracking-[-1.2px]">Use</span>
        </div>
        <div className="flex h-11 items-center text-[27px] text-black">
          <span className="w-[602px] pl-2 pt-1 tracking-[-0.75px]">2.rocky.pool.ntp.org</span>
          <span className="flex w-[82px] justify-center pl-0.5"><Check on /></span>
          <span className="flex w-[78px] justify-center pl-0.5"><Check /></span>
          <span className="flex w-[132px] justify-center pl-1"><Working /></span>
          <span className="flex flex-1 justify-center pl-0.5"><Check on /></span>
        </div>
      </div>
      <div className="mt-3 flex justify-end gap-2">
        <DialogButton>Cancel</DialogButton>
        <DialogButton>OK</DialogButton>
      </div>
    </div>
  );
}

export default function App() {
  return (
    <div className="h-[1900px] w-[2784px] overflow-hidden bg-white pl-[111px] pt-[75px]">
      <div className="h-[1678px] w-[2562px] rounded-[22px] shadow-[0_36px_72px_rgba(0,0,0,0.62),0_0_40px_rgba(0,0,0,0.16)]">
        <div className={"relative flex h-full w-full flex-col overflow-hidden rounded-[22px] border border-black " + GUEST}>
          <TitleBar />
          <Header />
          <RegionBar />
          <WorldMap />
          <BottomBar />
          <div className="pointer-events-none absolute inset-0 rounded-[21px] shadow-[inset_0_0_0_2px_rgba(255,255,255,0.22)]" />
          <Dialog />
        </div>
      </div>
    </div>
  );
}
